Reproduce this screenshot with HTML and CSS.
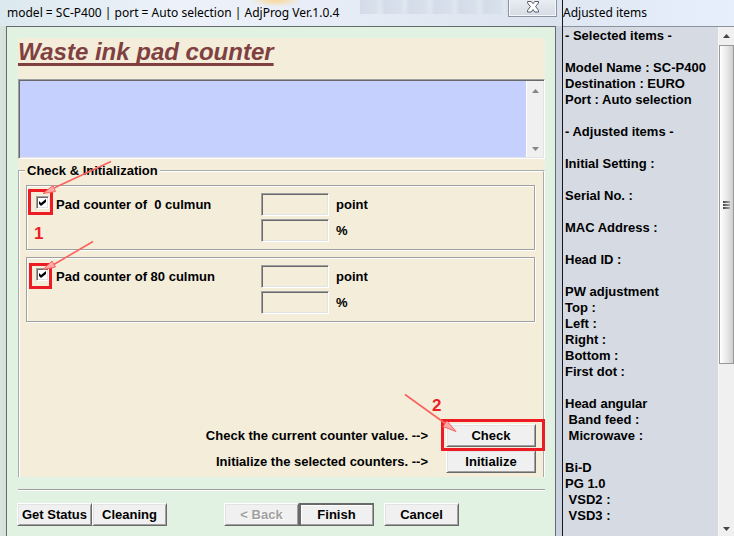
FILE: index.html
```html
<!DOCTYPE html>
<html lang="en">
<head>
<meta charset="utf-8">
<title>AdjProg</title>
<link rel="stylesheet" href="styles.css">
</head>
<body>
<div class="desktop">
  <main class="dialog">
    <header class="titlebar">
      <span class="caption">model = SC-P400 | port = Auto selection | AdjProg Ver.1.0.4</span>
      <button class="close" type="button" aria-label="Close">
        <svg width="12" height="12" viewBox="0 0 12 12"><path d="M.5 1.5V.5h3.8L6 2.7 7.700.5h3.800v1.500L8.600 5.500l2.900 3.900v1.600H7.700L6 8.600 4.300 11H.5V9.400L3.400 5.500.5 2z" fill="#fff" stroke="#565b66"/></svg>
      </button>
    </header>
    <form class="client">
      <section class="page">
        <h1>Waste ink pad counter</h1>
        <div class="log">
          <textarea aria-label="Log" readonly></textarea>
          <div class="scroll log-scroll">
            <svg width="7" height="4" viewBox="0 0 7 4"><path d="M0 4 3.500 0 7 4z" fill="#858585"/></svg>
            <svg width="7" height="4" viewBox="0 0 7 4"><path d="M0 0h7L3.500 4z" fill="#858585"/></svg>
          </div>
        </div>
        <fieldset class="group">
          <legend>Check &amp; Initialization</legend>
          <div class="counter">
            <input class="tick" type="checkbox" id="pad0" checked>
            <label class="name" for="pad0">Pad counter of &nbsp;0 culmun</label>
            <input class="value" type="text" id="pt0"><label for="pt0">point</label>
            <input class="value second" type="text" id="pc0"><label for="pc0">%</label>
          </div>
          <div class="counter">
            <input class="tick" type="checkbox" id="pad80" checked>
            <label class="name" for="pad80">Pad counter of 80 culmun</label>
            <input class="value" type="text" id="pt80"><label for="pt80">point</label>
            <input class="value second" type="text" id="pc80"><label for="pc80">%</label>
          </div>
          <div class="actions">
            <span>Check the current counter value. --&gt;</span>
            <button class="btn" type="button">Check</button>
            <span>Initialize the selected counters. --&gt;</span>
            <button class="btn" type="button">Initialize</button>
          </div>
        </fieldset>
      </section>
      <footer class="footer">
        <div class="pair">
          <button class="btn" type="button">Get Status</button>
          <button class="btn" type="button">Cleaning</button>
        </div>
        <div class="pair">
          <button class="btn" type="button" disabled>&lt; Back</button>
          <button class="btn default" type="button">Finish</button>
        </div>
        <button class="btn" type="button">Cancel</button>
      </footer>
    </form>
    <svg class="notes" width="562" height="536" viewBox="0 0 562 536">
      <g fill="none" stroke="#ed1c24" stroke-width="3">
        <path d="M29.500 190.500h22v23h-22zM30.500 264.500h20v23h-20zM442.500 420.500h101v29h-101z"/>
      </g>
      <g stroke="#f9635f" stroke-width="1.600">
        <path d="M111 161.500 54 188M93 241.500 53 265M405 394.500 446 424"/>
      </g>
      <g fill="#ffaaa6" stroke="#f9635f">
        <path d="M43 193.500 53 185.500 55.500 191.500zM43 269.500 52 261 55.500 267zM456 431.500 443 426.500 447 421z"/>
      </g>
      <text x="34" y="239">1</text>
      <text x="432" y="411">2</text>
    </svg>
  </main>
  <aside class="side">
    <header class="side-title">Adjusted items</header>
    <div class="side-body">
<pre class="items">- Selected items -

Model Name : SC-P400
Destination : EURO
Port : Auto selection

- Adjusted items -

Initial Setting :

Serial No. :

MAC Address :

Head ID :

PW adjustment
Top :
Left :
Right :
Bottom :
First dot :

Head angular
 Band feed :
 Microwave :

Bi-D
PG 1.0
 VSD2 :
 VSD3 :</pre>
      <div class="scroll side-scroll">
        <svg width="7" height="4" viewBox="0 0 7 4"><path d="M0 4 3.500 0 7 4z" fill="#444"/></svg>
        <div class="thumb"><i></i><i></i><i></i></div>
        <svg width="7" height="4" viewBox="0 0 7 4"><path d="M0 0h7L3.500 4z" fill="#444"/></svg>
      </div>
    </div>
  </aside>
</div>
</body>
</html>
```
FILE: styles.css
```css
* { box-sizing: border-box; }

body {
  margin: 0;
  font: bold 13px/16px "Liberation Sans", Arial, sans-serif;
  color: #000;
}

button, input, textarea { font: inherit; color: inherit; }

.desktop { display: flex; min-height: 100vh; }

/* Main dialog */
.dialog {
  position: relative;
  flex: 1;
  display: flex;
  flex-direction: column;
  padding: 0 6px;
  background: linear-gradient(90deg, #d9e6dc 0, #d3dfdb 6px, #cbd3df 50%, #c9d1de 100%);
}

.titlebar {
  display: flex;
  justify-content: space-between;
  align-items: flex-start;
  height: 26px;
  margin: 0 -6px;
  padding-left: 7px;
  padding-right: 5px;
  background:
    radial-gradient(ellipse 26px 7px at 276px 0, #fbd795, transparent),
    repeating-linear-gradient(90deg, #d3dce8 0, #d7e0eb 14px, #dfe7f0 20px, #d3dce8 25px) 360px 0 / 150px 14px no-repeat,
    linear-gradient(90deg, #dce9ef, #edf2fa 180px, #e6ecf6 350px, #dbe3ee);
}

.caption, .side-title {
  font: 12px/26px "Noto Sans", "Open Sans", sans-serif;
  white-space: nowrap;
}

.close {
  width: 49px;
  height: 17px;
  padding: 0;
  border: 1px solid #8e949f;
  border-top: 0;
  background: linear-gradient(#e9edf3, #d5dbe4);
  box-shadow: inset 1px -1px #f6f8fb, inset -1px 0 #f6f8fb;
}
.close svg { display: block; margin: -2px auto 0; }

.client {
  flex: 1;
  padding: 11px 10px 9px 11px;
  border: solid #646b6c;
  border-width: 1px 1px 0;
  background: #e1f2e3;
}

.page { background: #f3edda; }

h1 {
  height: 41px;
  margin: 0;
  color: #804040;
  font: italic bold 24px/28px "Liberation Sans", Arial, sans-serif;
  text-decoration: underline 3px;
  text-underline-offset: 3px;
  text-decoration-skip-ink: none;
}

.log {
  display: flex;
  height: 80px;
  border: 1px solid;
  border-color: #a0a0a0 #fff #fff #a0a0a0;
  box-shadow: inset 1px 1px #696969, inset -1px -1px #e3e3e3;
  padding: 1px;
}
.log textarea {
  flex: 1;
  min-width: 0;
  border: 0;
  padding: 2px;
  resize: none;
  background: #c6d0fe;
}

.scroll {
  display: flex;
  flex-direction: column;
  align-items: center;
  justify-content: space-between;
  background: #f0f0f0;
}
.log-scroll { width: 17px; padding: 8px 0 6px; border-left: 1px solid #fff; }

.group {
  min-width: 0;
  margin: 4px 0 0;
  padding: 6px 7px 4px 6px;
  border: 2px groove #fff;
  border-bottom: 0;
}
.group legend { padding: 0 2px; margin-left: -1px; }

.counter {
  display: grid;
  grid-template-columns: 13px 198px 68px 1fr;
  column-gap: 7px;
  row-gap: 3px;
  align-items: center;
  margin: 0 1px 7px 0;
  padding: 7px 9px;
  border: 1px solid #a0a0a0;
  box-shadow: 1px 1px #fff, inset 1px 1px #fff;
}
.tick {
  appearance: none;
  align-self: start;
  width: 13px;
  height: 13px;
  margin: 3px 0 0;
  border: 1px solid;
  border-color: #a0a0a0 #fff #fff #a0a0a0;
  box-shadow: inset 1px 1px #696969, inset -1px -1px #e3e3e3;
  background: #fff;
}
.tick:checked::after {
  content: "";
  display: block;
  width: 7px;
  height: 7px;
  margin: 2px;
  background: #000;
  clip-path: polygon(0 2px, 2px 4px, 7px 0, 7px 3px, 2px 7px, 0 5px);
}
.value {
  width: 68px;
  height: 23px;
  padding: 2px 4px;
  border: 1px solid;
  border-color: #a0a0a0 #fff #fff #a0a0a0;
  box-shadow: inset 1px 1px #696969, inset -1px -1px #e3e3e3;
  background: transparent;
}
.second { grid-column: 3; }

.actions {
  display: grid;
  grid-template-columns: 1fr 90px;
  gap: 3px 18px;
  align-items: center;
  justify-items: end;
  margin-top: 102px;
}
.actions .btn { width: 90px; }

/* Raised buttons */
.btn {
  width: 75px;
  height: 23px;
  padding: 0;
  white-space: nowrap;
  border: 1px solid;
  border-color: #fff #696969 #696969 #fff;
  box-shadow: inset 1px 1px #e3e3e3, inset -1px -1px #a0a0a0;
  background: #f0f0f0;
}
.btn.default {
  border-color: #696969;
  box-shadow: inset 1px 1px #696969, inset -1px -1px #a0a0a0, inset 2px 2px #fff;
}
.btn:disabled { color: #a0a0a0; text-shadow: 1px 1px #fff; }

.footer {
  display: flex;
  margin-top: 12px;
  padding-top: 13px;
  border-top: 1px solid #a0a0a0;
  box-shadow: inset 0 1px #fff;
}
.pair { display: flex; margin-left: -1px; }
.pair + .pair { margin-left: 57px; }
.pair + .btn { margin-left: 10px; }

/* Callouts drawn over the dialog */
.notes { position: absolute; top: 0; left: 0; pointer-events: none; }
.notes text { fill: #ed1c24; font: bold 17px "Liberation Sans", Arial, sans-serif; }

/* Side panel */
.side {
  display: flex;
  flex-direction: column;
  width: 172px;
  border-left: 1px solid #15181c;
}
.side-title {
  height: 27px;
  border-bottom: 1px solid #8b939e;
  background: linear-gradient(90deg, #dfe7f3, #e6effb);
}
.side-body { display: flex; flex: 1; background: #d6dbe3; }
.items { flex: 1; margin: 0; padding: 1px 2px; font: inherit; }
.side-scroll { width: 16px; padding: 7px 0 5px; border-left: 1px solid #f8f8f8; }
.thumb {
  display: flex;
  flex-direction: column;
  justify-content: center;
  align-items: center;
  gap: 1px;
  width: 15px;
  height: 319px;
  margin: 7px 0 auto;
  border: 1px solid #989898;
  background: linear-gradient(90deg, #fff, #ececec 45%, #cfcfcf);
}
.thumb i { width: 7px; height: 2px; background: linear-gradient(90deg, #444, #aaa); }
```
